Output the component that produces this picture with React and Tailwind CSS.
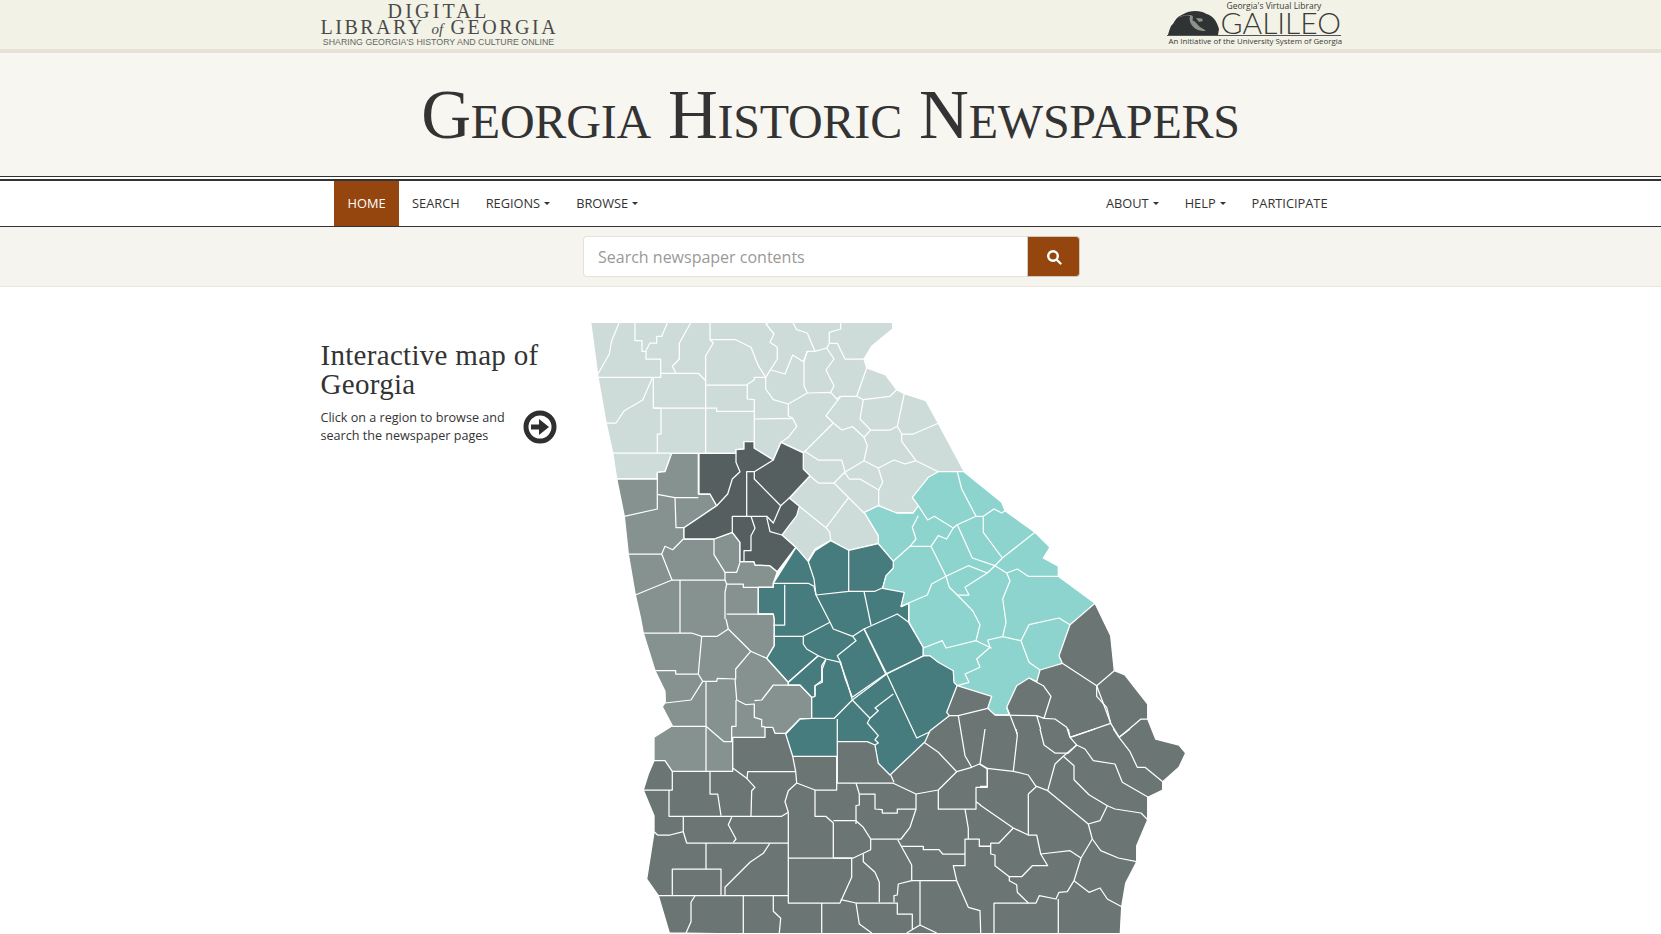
// crop origins the map points were read from (3x zoom)
const Z4 = [570, 310];
const Z5 = [620, 620];
const Z6 = [850, 460];
const Z8 = [980, 730];
const Z9 = [740, 540];

const at = ([ox, oy], s) =>
  s.trim().split(/\s+/).map((p) => {
    const [x, y] = p.split(',').map(Number);
    return `${(ox + x / 3).toFixed(1)},${(oy + y / 3).toFixed(1)}`;
  }).join(' ');

const zones = [
  // south
  ['#6a7574', [[Z5, '102,355 102,425 85,465 70,513 102,590 102,640 80,780 115,830 148,942'],
    [Z8, '420,630 425,533 437,462 470,398 470,350 503,272 503,205 548,183 548,158 597,115 617,72 597,48 527,30'],
    [Z6, '893,780 893,735 825,648 793,635 782,530 735,433']]],
  // north
  ['#cddbd9', [[Z4, '62,40 968,40 968,60 905,112 882,150 890,177 947,198 980,242 1003,254 1068,275 1105,343 1183,488 1105,488 1075,510 1028,566 1050,590 1030,610 980,612 926,590 884,612 926,682 926,703 836,724 782,694 735,720 713,757 677,715 636,678 688,592 658,567 720,500 700,480 700,430 633,400 610,453 553,418 553,398 522,398 522,420 498,422 498,433 305,433 285,488 262,490 262,510 140,510 128,432 108,340 84,205']]],
  // west
  ['#85928f', [[Z4, '140,510 262,510 262,490 285,488 305,433 385,433 385,555 420,555 440,590 342,656 342,690 432,690 487,670 510,700 510,758 552,758 555,768 600,770 622,788 610,823 610,835 565,835 565,915 610,915'],
    [Z5, '463,0 463,80 440,118 505,190 505,198 540,198 575,235 575,298 540,300 497,343 465,343 458,325 435,325 435,355 338,355 338,457 157,457 135,425 102,425 102,355 157,320 127,263 136,250 135,217 105,155 70,42'],
    [Z4, '212,930 196,858 175,735 163,622']]],
  // metro
  ['#565f60', [[Z4, '522,398 553,398 553,418 610,453 633,400 700,432 700,480 720,500 658,567 688,592 680,620 636,678 677,715 622,788 600,770 555,768 552,758 510,758 510,700 487,670 432,690 342,690 342,656 440,590 420,555 387,555 387,433 498,433 498,422 522,420']]],
  // central
  ['#467c7d', [[Z9, '168,25 205,68 225,35 272,5 326,34 415,14 462,67 460,92 437,115 428,146 495,157 484,203 506,193 506,250 550,325 550,350 575,350 595,365 640,392 643,425 652,438'],
    [Z6, '290,760 298,770 240,815 225,848 120,948'],
    [Z5, '775,433 765,378 742,368 652,368 652,412 518,412 497,345 540,300 575,298 575,235 540,198 505,198 505,190 440,118 463,80 463,0'],
    [Z4, '610,915 565,915 565,835 610,835 610,823']]],
  // east
  ['#8cd4cd', [[Z6, '265,38 342,38 455,130 465,155 555,220 600,265 580,297 625,322 625,352 735,433 660,497 627,590 637,613 570,633 560,668 537,657 500,680 470,745 478,768 435,768 413,748 425,712 322,680 312,670 310,635 265,610 240,590 220,590 220,565 177,490 177,432 153,442 163,400 98,388 108,350 130,327 130,307 85,253 85,230 43,160 85,140 140,162 190,162 205,140 187,115 235,55']]],
];

const lines = [
  [Z4, [
    '148,40 125,95 118,135 84,195', '84,205 272,205 272,150 228,150 228,125 240,102 260,102 260,82 275,82 293,40',
    '195,40 195,95 216,95 216,127 228,127', '272,193 318,193 307,172 328,150 328,103 363,40',
    '318,193 385,193 407,215 407,140 430,102 420,92 420,40', '420,92 497,92 543,115 565,170 587,205 622,150 622,115 600,100 612,75 588,45 597,40',
    '407,228 530,228 553,212 553,205 587,205', '248,205 218,273 163,305 138,342 108,342',
    '250,205 250,297 273,297 273,375 262,375 262,432', '250,297 440,297 440,307 553,307', '407,215 407,432', '128,432 305,432',
    '532,228 532,270 553,272 553,418', '553,330 668,328 680,352 655,385 633,400',
    '587,205 587,240 610,272 655,285 712,252 782,250 800,270 812,262 860,262', '655,285 655,320 668,328',
    '603,183 645,195 668,138 700,158 712,127 735,127 770,117 792,150 768,183 792,230 782,250', '712,127 702,158 702,230 712,252',
    '668,40 680,62 712,72 735,127', '770,117 778,103 778,70 812,60 812,40', '778,103 802,103 825,150 882,150',
    '890,177 860,262 880,272 960,262 980,242', '880,272 870,330 902,363 960,363 982,352 1003,254',
    '812,262 768,320 790,342 815,363 848,353 882,385', '902,363 882,385 892,410 882,455', '982,352 995,375 1030,375 1105,343',
    '995,375 995,397 1038,455 1105,488', '790,342 702,430', '702,425 745,453 815,453 825,488',
    '824,490 882,455 925,477 938,520 926,543 870,510 838,510 824,490 792,522 745,522 720,500', '925,477 972,453 1005,465 1038,455',
    '926,543 926,590', '792,522 882,612', '835,567 768,656 688,592', '768,656 779,670 782,694',
    '498,433 498,460 510,488 487,510 473,555 440,590',
    '610,453 553,488 530,488 530,622 590,622 610,642 632,590 553,510 553,488', '632,590 658,567', '530,622 487,622 487,670',
    '543,622 555,658 543,680 543,725 522,725 522,758', '590,625 600,668 636,678',
    '262,510 262,600 163,622', '262,556 315,566 385,566', '315,566 318,656 342,656',
    '175,735 275,735 285,712 308,722 340,690', '275,735 306,813 196,858', '306,813 465,813 465,790',
    '432,690 432,737 465,790 500,790 510,760', '465,813 470,825 465,850 465,930', '470,825 520,825 520,835 610,835',
    '330,813 330,930', '470,915 610,915',
  ]],
  [Z5, [
    '70,42 215,42 245,52 292,52 325,30', '180,0 180,42', '325,30 392,97 347,150 347,180 292,178 290,187 248,187 235,165 245,52',
    '105,155 167,155 167,165 235,165', '248,187 213,243 136,252', '392,97 440,118',
    '345,180 350,243 378,257 403,255 403,295 425,302 425,323 435,323', '403,245 425,243 460,198 505,198', '258,187 258,457',
    '157,322 258,322 312,368 335,368 335,322 348,322 348,243', '325,30 318,0',
    // central
    '595,110 505,190', '617,122 605,140 605,185 585,200 585,232 575,235', '660,130 680,185 697,243 643,298 575,298',
    '697,243 800,165 912,110', '733,30 800,165 890,357 930,338', '697,243 750,298 775,275 765,267 820,225',
    '750,298 742,312 775,350 765,362 775,372 765,378', '652,300 652,368',
    // south
    '338,447 380,478 405,505 395,515 393,592', '381,480 383,458 527,458', '518,412 527,458 530,492 585,513 650,513 650,412',
    '157,457 157,513 70,513', '147,513 147,592 485,592 505,580', '270,457 270,525 293,525 303,590',
    '190,592 190,638 150,648 113,648 102,638', '190,638 200,672 505,672', '335,595 325,617 348,660 340,670',
    '530,492 505,515 495,548 505,580 505,852 660,852 695,775 695,717 505,717', '585,513 585,592 617,592 640,612 640,717',
    '640,605 708,605 730,625 752,660 752,692 700,717 640,717', '652,412 652,492 818,492 888,525 955,513 1010,458 955,400 912,370',
    '812,468 822,490', '708,492 718,525 718,558 708,560 708,615', '720,525 765,525 765,570 787,572 787,582 832,582 832,570 888,570 888,525',
    '888,570 870,625 843,660 752,660', '833,662 875,738 875,785 835,795 832,828 822,830 822,850',
    '778,850 778,790 765,760 730,728 730,705', '662,842 708,852 718,915 755,942', '708,852 832,852 832,885 877,885 877,930',
    '843,682 910,682 910,692 957,692 968,705 1035,705', '875,785 1010,785', '900,785 900,918 860,942', '900,918 950,942',
    '1010,785 1000,740 1035,740 1035,660 1078,660 1078,682 1112,682', '955,513 955,570 1068,570 1068,505 1102,505 1102,450',
    '1035,570 1045,628 1045,660', '1068,548 1082,558', '1010,785 1045,865 1080,875 1082,942',
    '1010,458 1055,445 1078,435 1102,450', '460,830 460,877 482,898 478,942', '370,830 370,942', '115,830 505,830',
    '225,830 213,850 213,908 198,942', '258,672 258,750 157,750 157,830', '258,750 303,750 303,830', '450,672 430,703 390,730 315,805 315,830',
    '605,852 605,942',
  ]],
  [Z9, [
    '100,133 205,133 222,142 228,168', '205,68 222,120 228,168', '326,34 326,157', '228,168 326,157 405,157 428,146',
    '228,168 270,250 190,292 100,292', '270,250 280,270 338,292 348,305 292,350 302,370 258,360 235,350 200,330 190,315 190,292',
    '338,292 372,270 472,225 506,250', '372,157 393,258', '134,137 134,258 100,258', '372,270 437,405 337,475', '437,405 550,350',
    '235,350 146,428', '258,360 247,390 247,430 225,440 225,470', '302,370 316,420 337,475',
  ]],
  [Z6, [
    '322,38 335,90 378,172 322,197 310,207 253,172 233,183 205,140', '378,172 400,172 432,150 455,162 465,155',
    '400,172 400,220 457,297 555,220', '457,297 435,320 367,297 322,197', '435,320 470,342 502,330 535,352 625,352',
    '310,207 290,240 265,230 243,262 180,262 130,307', '205,170 187,205 198,240 180,262',
    '243,262 288,352 298,385 322,408 368,455 390,497 378,545 425,568', '435,320 412,342 345,385 357,408 322,408',
    '412,342 355,320 288,352 245,375 232,408 153,442', '470,342 480,365 458,420 468,490 458,533 513,545',
    '513,545 537,497 627,477 660,497', '513,545 537,610 570,633', '458,533 413,543 420,565 380,600 390,625 345,645 357,670 322,680',
    '378,545 288,567 277,545 220,567',
    // south
    '298,770 325,770 413,748', '325,770 345,890 365,925', '470,745 480,768 502,825', '435,768 560,770 582,778 603,712 580,680 537,657',
    '560,770 572,810', '582,778 615,780 650,805 660,835', '660,835 782,793 740,680 637,613', '782,793 808,835', '740,680 793,635',
    '740,680 740,712 770,745 782,793', '808,835 873,780 893,780',
  ]],
  [Z8, [
    '145,195 170,172 203,185 325,285 360,275 382,230', '203,185 225,105 250,82',
    '250,82 282,110 282,152 327,197 382,230 405,240 483,252 503,272',
    '145,195 145,318 170,318 182,375 270,365 303,387',
    '325,285 337,330 303,387 282,455 262,488 237,490 228,510 178,500 168,522 42,522 42,612',
    '337,330 362,365 415,387 470,398', '282,455 327,490 360,477 382,510 425,533', '235,510 235,612',
    '0,228 100,297 145,318', '100,297 57,342 32,342 32,375 45,378 45,410 88,443 125,443 157,410 203,410 182,375',
    '88,443 88,455 110,467 112,490 145,522', '0,352 30,352', '0,172 22,172 22,118 100,127 145,138 168,172', '22,118 0,105',
    '100,127 112,20 108,0', '15,0 0,105', '180,0 192,48 225,72 265,72 290,48',
    '265,0 270,25 290,48 315,60 340,95 405,105 427,160 505,205', '270,25 345,0',
    '400,0 417,25 450,68 472,115 495,115 548,158', '417,25 450,0', '250,82 290,48',
  ]],
];

function GeorgiaMap() {
  return (
    <svg viewBox="590 323 600 611" className="w-[600px] h-[611px] block shrink-0">
      {zones.map(([fill, parts]) => (
        <polygon key={fill} fill={fill} stroke="#ffffff" strokeWidth="1.3" strokeLinejoin="round"
          points={parts.map(([z, s]) => at(z, s)).join(' ')} />
      ))}
      <g fill="none" stroke="#ffffff" strokeWidth="1.25" strokeLinejoin="round">
        {lines.map(([z, list]) => list.map((s, i) => <polyline key={z[0] + '-' + i} points={at(z, s)} />))}
      </g>
    </svg>
  );
}

function NavItem({ label, caret, active }) {
  return (
    <a className={`flex items-center gap-[4px] h-full ${active ? 'px-[13.5px] bg-[#94460e] text-white' : 'px-[13px] text-[#333333]'}`}>
      {label}
      {caret && <span className="w-0 h-0 border-x-[3.5px] border-x-transparent border-t-[3.5px] border-t-[#333333]" />}
    </a>
  );
}

function GlobeLogo() {
  return (
    <svg viewBox="0 0 52 25" className="w-[52px] h-[25px] block shrink-0">
      <path d="M1 25 C3 18 4 15 6 14 C9 8 12 6 16 4.3 C20 2 24 1 28 1 C33 1 36 2 39 3.7 C43 5 46 7 48 10 C50 13 51 16 52 19 L51 25 Z" fill="#2f3333" />
      <path d="M11 8 C15 6 19 5 23 6 C22 9 23 12 24 14 C26 17 28 19 31 20 C34 21 37 21 39 21 C36 18 33 18 31 15 C29 13 28 11 26 11 C25 8 27 7 25 5.5 C20 4.5 15 5 11 8 Z M29 8 L35 8.5 L36 11 L32 12 Z" fill="#8f918a" />
    </svg>
  );
}

export default function App() {
  return (
    <div className="h-[934px] overflow-hidden bg-white font-['Open_Sans',sans-serif] text-[#333333]">
      {/* logos */}
      <div className="bg-[#f2f2e6] h-[53px] border-b-4 border-[#e6e3d6]">
        <div className="w-[1020px] mx-auto flex justify-between">
          <div className="w-[236px] text-center text-[#4a4a4a] font-['Liberation_Serif',serif]">
            <div className="text-[20px] leading-[17px] pt-[3px] tracking-[3.2px]">DIGITAL</div>
            <div className="text-[20px] leading-[15px] tracking-[2.5px] whitespace-nowrap">
              LIBRARY <i className="text-[15px] tracking-normal">of</i> GEORGIA
            </div>
            <div className="font-['Liberation_Sans',sans-serif] text-[8.8px] leading-[10px] whitespace-nowrap text-[#666666]">
              SHARING GEORGIA&apos;S HISTORY AND CULTURE ONLINE
            </div>
          </div>
          <div className="w-[172px] text-[#3a3a3a]">
            <div className="text-[8.5px] leading-[10px] pt-[1px] pl-[58px] whitespace-nowrap">Georgia&apos;s Virtual Library</div>
            <div className="flex items-end h-[25px] border-b border-[#555555] -ml-[2px]">
              <GlobeLogo />
              <span className="font-['Lato',sans-serif] font-light text-[30px] leading-[25px] ml-[2px] whitespace-nowrap">GALILEO</span>
            </div>
            <div className="text-[7.85px] leading-[10px] whitespace-nowrap">An Initiative of the University System of Georgia</div>
          </div>
        </div>
      </div>

      {/* title */}
      <div className="bg-[#f7f6f1] h-[124px] flex justify-center items-center border-b border-[#333333]">
        <h1 className="font-['Liberation_Serif',serif] text-[69px] leading-none tracking-[-0.2px] text-[#333333] whitespace-nowrap [font-variant:small-caps] pt-[2px]">
          Georgia Historic Newspapers
        </h1>
      </div>

      {/* nav */}
      <div className="bg-white mt-[2px] h-[48px] border-t-2 border-b border-t-[#333333] border-b-[#333333]">
        <div className="w-[1020px] mx-auto h-full flex justify-between text-[12.8px] pl-[13.5px]">
          <nav className="flex h-full">
            <NavItem label="HOME" active />
            <NavItem label="SEARCH" />
            <NavItem label="REGIONS" caret />
            <NavItem label="BROWSE" caret />
          </nav>
          <nav className="flex h-full">
            <NavItem label="ABOUT" caret />
            <NavItem label="HELP" caret />
            <NavItem label="PARTICIPATE" />
          </nav>
        </div>
      </div>

      {/* search */}
      <div className="bg-[#f5f4ef] h-[60px] border-b border-[#e8e6da] flex justify-center items-center">
        <div className="flex w-[497px] h-[41px] ml-[2px]">
          <div className="flex-1 bg-white border border-[#e6e3d6] border-r-0 rounded-l-[4px] pl-[14px] flex items-center text-[16px] text-[#999999]">
            Search newspaper contents
          </div>
          <div className="w-[53px] bg-[#94460e] border border-[#cfcabb] rounded-r-[4px] flex items-center justify-center">
            <svg viewBox="0 0 16 16" className="w-[16px] h-[16px]" fill="none" stroke="#ffffff" strokeWidth="2.4">
              <circle cx="7" cy="7" r="4.8" />
              <path d="M10.5 10.5 L14.5 14.5" strokeLinecap="round" />
            </svg>
          </div>
        </div>
      </div>

      {/* map */}
      <div className="w-[1020px] mx-auto flex pt-[35px]">
        <div className="w-[269.5px] shrink-0 pt-[19px]">
          <h2 className="font-['Liberation_Serif',serif] text-[29px] leading-[29px] tracking-[0.3px] w-[236px] text-[#333333]">Interactive map of Georgia</h2>
          <div className="flex items-center w-[236px] mt-[10px]">
            <p className="text-[12.6px] leading-[18px] flex-1">Click on a region to browse and search the newspaper pages</p>
            <svg viewBox="0 0 34 34" className="w-[34px] h-[34px] shrink-0">
              <circle cx="17" cy="17" r="14" fill="none" stroke="#2f2f2f" strokeWidth="5" />
              <path d="M8 14.5 H16 V9 L26 17 L16 25 V19.5 H8 Z" fill="#2f2f2f" />
            </svg>
          </div>
        </div>
        <GeorgiaMap />
      </div>
    </div>
  );
}
